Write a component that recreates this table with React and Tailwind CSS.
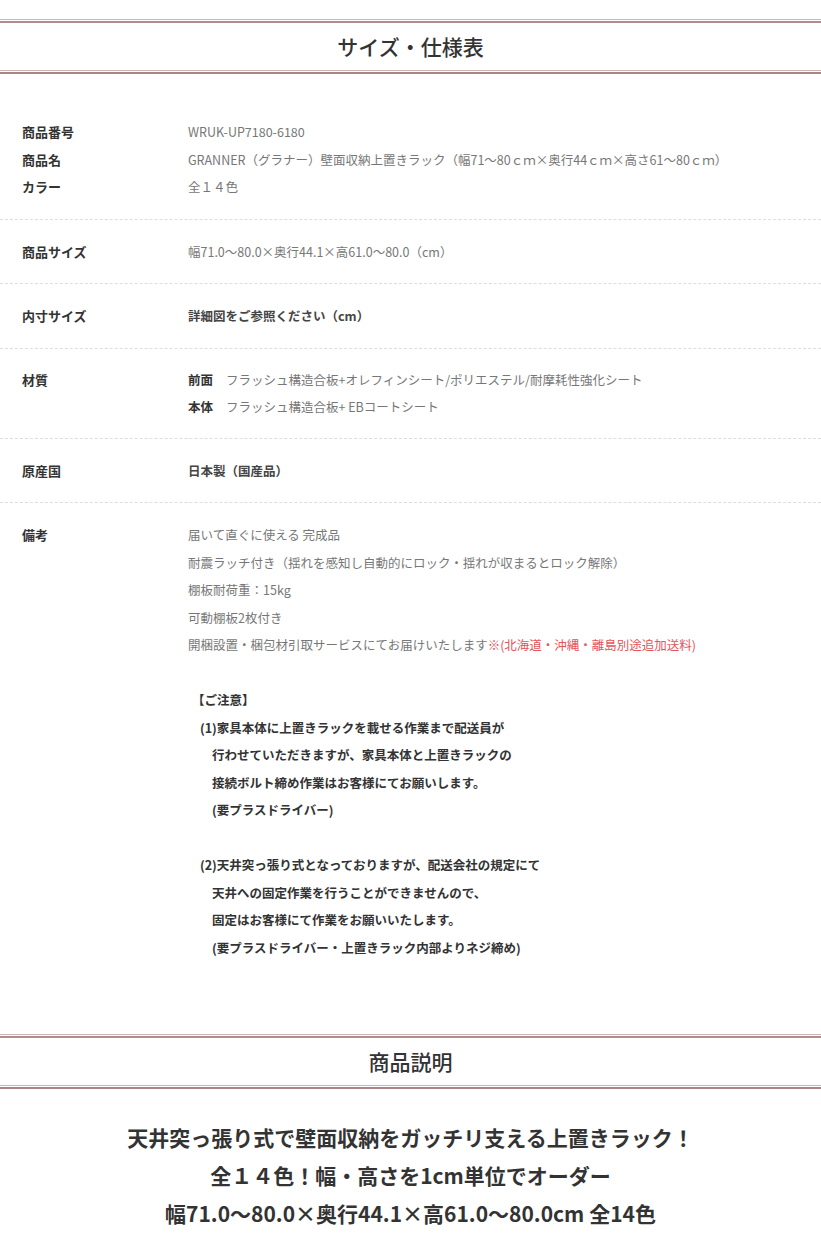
const font = { fontFamily: '"Noto Sans CJK JP", "Noto Sans", sans-serif' };

const SectionHeader = ({ title }) => {
  return (
    <div>
      <div className="h-px bg-[#cdb3b3]" />
      <div className="h-px" />
      <div className="h-[2px] bg-[#b08c8e]" />
      <div className="h-[47px] flex items-center justify-center text-[21px] font-medium text-[#333]">{title}</div>
      <div className="h-px bg-[#cdb3b3]" />
      <div className="h-px" />
      <div className="h-[2px] bg-[#a98587]" />
    </div>
  );
};

const Row = ({ label, children, last, tight }) => {
  return (
    <div className={`flex ${tight ? "py-[17px]" : "py-[18px]"} ${last ? "" : "border-b border-dashed border-[#dedede]"}`}>
      <div className="w-[188px] pl-[22px] shrink-0 font-bold text-[#333]">{label}</div>
      <div className="flex-1 text-[#777] text-[12.5px]">{children}</div>
    </div>
  );
};

const specs = [
  { label: "商品サイズ", value: "幅71.0～80.0×奥行44.1×高61.0～80.0（cm）" },
];

export default function App() {
  return (
    <div style={font} className="bg-white w-[821px] pt-[19px] pb-[20px] text-[13px] leading-[27.5px]">
      <SectionHeader title="サイズ・仕様表" />

      <div className="mt-[26px]">
        <div className="flex py-[18px] border-b border-dashed border-[#dedede]">
          <div className="w-[188px] pl-[22px] shrink-0 font-bold text-[#333]">
            <div>商品番号</div>
            <div>商品名</div>
            <div>カラー</div>
          </div>
          <div className="flex-1 text-[#777] text-[12.5px]">
            <div>WRUK-UP7180-6180</div>
            <div>GRANNER（グラナー）壁面収納上置きラック（幅71～80ｃｍ×奥行44ｃｍ×高さ61～80ｃｍ）</div>
            <div>全１４色</div>
          </div>
        </div>

        {specs.map((s) => (
          <Row key={s.label} label={s.label}>{s.value}</Row>
        ))}

        <Row label="内寸サイズ">
          <span className="font-bold text-[#444]">詳細図をご参照ください（cm）</span>
        </Row>

        <Row label="材質" tight>
          <div><span className="font-bold text-[#333] mr-[13px]">前面</span>フラッシュ構造合板+オレフィンシート/ポリエステル/耐摩耗性強化シート</div>
          <div><span className="font-bold text-[#333] mr-[13px]">本体</span>フラッシュ構造合板+ EBコートシート</div>
        </Row>

        <Row label="原産国">
          <span className="font-bold text-[#444]">日本製（国産品）</span>
        </Row>

        <Row label="備考" last>
          <div>届いて直ぐに使える 完成品</div>
          <div>耐震ラッチ付き（揺れを感知し自動的にロック・揺れが収まるとロック解除）</div>
          <div>棚板耐荷重：15kg</div>
          <div>可動棚板2枚付き</div>
          <div>開梱設置・梱包材引取サービスにてお届けいたします<span className="text-[#e4545a]">※(北海道・沖縄・離島別途追加送料)</span></div>
          <div className="h-[27.5px]" />
          <div className="font-bold text-[#333]">
            <div className="pl-[4px]">【ご注意】</div>
            <div className="pl-[12px]">(1)家具本体に上置きラックを載せる作業まで配送員が</div>
            <div className="pl-[24px]">行わせていただきますが、家具本体と上置きラックの</div>
            <div className="pl-[24px]">接続ボルト締め作業はお客様にてお願いします。</div>
            <div className="pl-[24px]">(要プラスドライバー)</div>
            <div className="h-[27.5px]" />
            <div className="pl-[12px]">(2)天井突っ張り式となっておりますが、配送会社の規定にて</div>
            <div className="pl-[24px]">天井への固定作業を行うことができませんので、</div>
            <div className="pl-[24px]">固定はお客様にて作業をお願いいたします。</div>
            <div className="pl-[24px]">(要プラスドライバー・上置きラック内部よりネジ締め)</div>
          </div>
        </Row>
      </div>

      <div className="mt-[55px]">
        <SectionHeader title="商品説明" />
      </div>

      <div className="mt-[29px] text-center text-[21px] leading-[38px] font-bold text-[#333]">
        <div>天井突っ張り式で壁面収納をガッチリ支える上置きラック！</div>
        <div>全１４色！幅・高さを1cm単位でオーダー</div>
        <div>幅71.0～80.0×奥行44.1×高61.0～80.0cm 全14色</div>
      </div>
    </div>
  );
}
